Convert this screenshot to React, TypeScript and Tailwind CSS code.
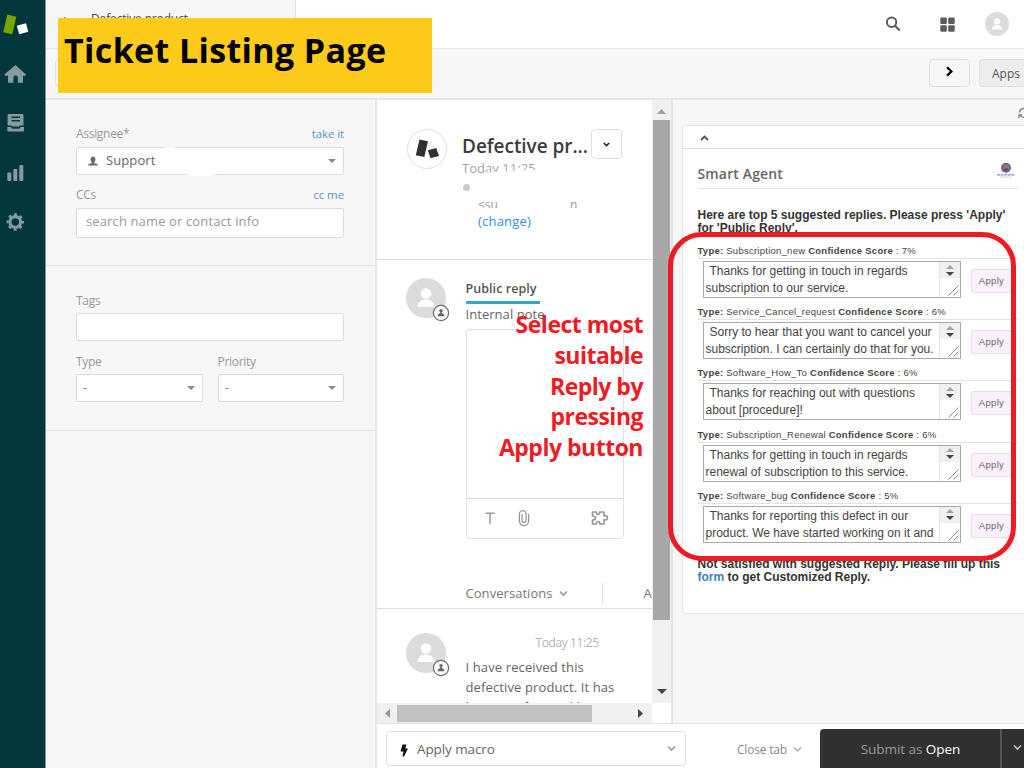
import React from "react";

const ui = "font-['Open_Sans','Noto_Sans',sans-serif]";
const arial = "font-['Liberation_Sans',Arial,sans-serif]";

function Chevron({ className = "", dir = "down", w = 1.6 }: { className?: string; dir?: "down" | "up" | "right"; w?: number }) {
  const d = dir === "down" ? "M1 2.5 4.5 6 8 2.5" : dir === "up" ? "M1 6 4.5 2.5 8 6" : "M2.5 1 6 4.5 2.5 8";
  return (
    <svg viewBox="0 0 9 9" className={className} fill="none" stroke="currentColor" strokeWidth={w}>
      <path d={d} />
    </svg>
  );
}

function Triangle({ className = "", d = "M0 0H8L4 4Z", box = "0 0 8 4" }: { className?: string; d?: string; box?: string }) {
  return (
    <svg viewBox={box} className={className} fill="currentColor">
      <path d={d} />
    </svg>
  );
}

function Sidebar() {
  return (
    <aside className="flex h-full w-[46px] shrink-0 flex-col border-r border-[#7d9598] bg-[#03363d] text-[#849b9f]">
      <svg viewBox="0 0 32 24" className="mt-[13px] h-6 w-8 shrink-0">
        <path d="M7.2 1.5 16.300 3.800 12.300 21.300 3.200 19.300Z" fill="#78a300" />
        <path d="M16.8 12.700 26 10.200 28.3 18.8 19.3 21.2Z" fill="#fff" />
      </svg>
      <svg viewBox="0 0 24 20" className="ml-[3px] mt-[27px] h-5 w-6 shrink-0" fill="currentColor">
        <path d="M12.5 1 23 10.5 22 11.8H20V18.7H14.8V13.5Q14.8 11.5 12.6 11.5T10.4 13.5V18.7H5V11.8H2.3L1.3 10.5Z" />
      </svg>
      <svg viewBox="0 0 18 20" className="ml-[7px] mt-[29px] h-5 w-[18px] shrink-0" fill="currentColor">
        <path fillRule="evenodd" d="M1.500 1H15.500Q16.500 1 16.500 2V12.500H13L12 13.500H5.500L4.500 12.500H.6V2Q.6 1 1.500 1ZM4.500 3.500H13V5H4.500ZM4.500 7H13V8.500H4.500Z" />
        <path d="M.3 14H4L5.300 15.700H12.300L13.500 14H17V17.500Q17 18.500 16 18.500H1.300Q.3 18.500 .3 17.500Z" />
      </svg>
      <svg viewBox="0 0 18 18" className="ml-[7px] mt-[31px] h-[18px] w-[18px] shrink-0" fill="currentColor">
        <rect x=".3" y="8.5" width="4" height="8.5" rx="1" />
        <rect x="6.3" y="5" width="4" height="12" rx="1" />
        <rect x="12.3" y="1" width="4" height="16" rx="1" />
      </svg>
      <svg viewBox="0 0 18 18" className="ml-[6px] mt-[31px] h-[18px] w-[18px] shrink-0" fill="none" stroke="currentColor">
        <circle cx="9.3" cy="9" r="5.3" strokeWidth="3.2" />
        <circle cx="9.3" cy="9" r="7.6" strokeWidth="2.2" strokeDasharray="3 2.97" strokeDashoffset="1.5" />
      </svg>
    </aside>
  );
}

function Person({ className = "" }: { className?: string }) {
  return (
    <svg viewBox="0 0 40 40" className={className}>
      <circle cx="20" cy="20" r="20" fill="#dcdcdc" />
      <circle cx="20" cy="15.5" r="5.2" fill="#fff" />
      <path d="M11.5 29Q12 21.5 20 21.5T28.5 29Z" fill="#fff" />
    </svg>
  );
}

function Avatar() {
  return (
    <div className="relative h-10 w-10 shrink-0">
      <Person className="h-10 w-10" />
      <svg viewBox="0 0 18 18" className="absolute left-[26px] top-[26px] h-[18px] w-[18px]">
        <circle cx="9" cy="9" r="7.6" fill="#fff" stroke="#6a6a6a" strokeWidth="1.2" />
        <circle cx="9" cy="6.700" r="1.700" fill="#666" />
        <path d="M8.300 7H9.700V9.300Q12.400 9.600 12.400 12.200H5.600Q5.600 9.600 8.300 9.300Z" fill="#666" />
      </svg>
    </div>
  );
}

function TopBar() {
  return (
    <header className="flex h-[49px] shrink-0 border-b border-[#e6e6e6] bg-white">
      <div className="w-[250px] border-r border-[#e3e3e3] bg-[#f7f7f7] pl-[18px] pt-[10px]">
        <span className={`${ui} flex gap-[21px] text-[12px] leading-[17px] tracking-[-0.15px] text-[#444]`}>
          <span className="w-[6px] overflow-hidden">▸</span>
          <span>Defective product</span>
        </span>
      </div>
      <div className="flex flex-1 items-center justify-end">
        <svg viewBox="0 0 16 16" className="mr-[39px] h-4 w-4" fill="none" stroke="#5c5c5c">
          <circle cx="6.6" cy="6.2" r="4.7" strokeWidth="2" />
          <path d="M10 9.7 14.8 14.5" strokeWidth="2.2" />
        </svg>
        <svg viewBox="0 0 15 15" className="mr-[30px] h-[15px] w-[15px]" fill="#5c5c5c">
          <rect x=".3" y=".5" width="6.5" height="6.5" rx="1" />
          <rect x="8.2" y=".5" width="6.5" height="6.5" rx="1" />
          <rect x=".3" y="8.3" width="6.5" height="6.5" rx="1" />
          <rect x="8.2" y="8.3" width="6.5" height="6.5" rx="1" />
        </svg>
        <Person className="mr-[15px] h-6 w-6" />
      </div>
    </header>
  );
}

function ToolBar() {
  return (
    <div className="flex h-[51px] shrink-0 items-center border-b-2 border-[#e6e6e6] bg-[#f7f7f7] pb-[2px]">
      <div className="ml-[9px] h-7 w-[120px] rounded border border-[#e3e3e3]" />
      <div className="ml-auto flex h-7 w-[41px] items-center justify-center rounded border border-[#e0e0e0] pb-[2px]">
        <Chevron dir="right" w={1.9} className="h-[11px] w-[11px] text-black" />
      </div>
      <div className={`${ui} ml-[9px] h-7 w-[45px] rounded-l border border-r-0 border-[#dedede] bg-[#ededed] pl-3 text-[12px] leading-[28px] text-[#555]`}>
        Apps
      </div>
    </div>
  );
}

const label = `${ui} text-[12px] leading-[21px] tracking-[-0.3px] text-[#999]`;
const link = `${ui} text-[11.5px] leading-[21px] tracking-[-0.1px] text-[#5a94c4]`;
const box = "border border-[#dcdcdc] bg-white rounded-[2px]";

function TicketFields() {
  return (
    <section className="flex h-full w-[331px] shrink-0 flex-col border-r-2 border-[#e6e6e6] bg-[#f7f7f7]">
      <div className="h-[166px] border-b border-[#e6e6e6] pl-[30px] pr-[31px] pt-[23px]">
        <div className="flex h-6 justify-between">
          <span className={label}>Assignee*</span>
          <span className={link}>take it</span>
        </div>
        <div className={`${box} relative flex h-7 items-center pl-[10px] pr-[7px]`}>
          <svg viewBox="0 0 12 11" className="h-[11px] w-3" fill="#6b6b6b">
            <ellipse cx="6" cy="3.6" rx="2.4" ry="3" />
            <path d="M4.7 5H7.3V7.3Q11 7.8 11 9.6H1Q1 7.8 4.7 7.3Z" />
          </svg>
          <span className={`${ui} -mt-[2px] ml-[7px] text-[13px] leading-5 tracking-[0.1px] text-[#666]`}>Support</span>
          <Triangle className="ml-auto h-1 w-2 text-[#8a8a8a]" />
          <span className="absolute -top-px left-[84px] h-2 w-[19px] rounded-[50%] bg-white" />
          <span className="absolute -bottom-[2px] left-[102px] h-3 w-[44px] rounded-[50%] bg-white" />
        </div>
        <div className="mt-[9px] flex h-6 justify-between">
          <span className={label}>CCs</span>
          <span className={link}>cc me</span>
        </div>
        <div className={`${box} ${ui} h-[30px] pl-[9px] text-[13px] leading-[25px] tracking-[0.13px] text-[#999]`}>search name or contact info</div>
      </div>
      <div className="h-[165px] border-b border-[#e6e6e6] pl-[30px] pr-[31px] pt-[24px]">
        <div className={`${label} h-[23px]`}>Tags</div>
        <div className={`${box} h-7`} />
        <div className="mt-[10px] grid grid-cols-2 gap-[15px]">
          {["Type", "Priority"].map((t) => (
            <div key={t}>
              <div className={`${label} h-[23px]`}>{t}</div>
              <div className={`${box} flex h-7 items-center justify-between pl-[6px] pr-[7px]`}>
                <span className={`${ui} text-[13px] text-[#888]`}>-</span>
                <Triangle className="h-1 w-2 text-[#8a8a8a]" />
              </div>
            </div>
          ))}
        </div>
      </div>
    </section>
  );
}

function TicketHeader() {
  return (
    <div className="relative flex h-[160px] shrink-0 border-b border-[#dedede] pl-[30px] pt-[29px]">
      <div className="h-10 w-10 shrink-0 rounded-full border border-[#dedede]">
        <svg viewBox="0 0 38 38" className="h-[38px] w-[38px]" fill="#303030">
          <path d="M11.500 9.500 20 11.300 16.300 27 7.800 25.200Z" />
          <path d="M19.800 20.200 28.200 18 31 26 22.500 28.300Z" />
        </svg>
      </div>
      <div className={`${ui} ml-[15px] w-[129px]`}>
        <div className="h-[30px] w-[129px] whitespace-nowrap text-[19px] font-semibold leading-[34px] tracking-[-0.05px] text-[#3c3c3c]">Defective pr...</div>
        <div className="text-[13px] leading-[18px] tracking-[0.05px] text-[#a3a3a3]">Today 11:25</div>
        <div className="ml-px mt-[7px] h-[7px] w-[7px] rounded-full bg-[#ccc]" />
        <div className="ml-4 mt-[5px] h-[13px] text-[12px] leading-[17px] text-[#999]">
          &lt;su<span className="ml-[72px]">n</span>
        </div>
        <div className="relative z-10 ml-4 mt-[2px] text-[13px] leading-[20px] tracking-[0.2px] text-[#3091dc]">(change)</div>
      </div>
      <div className="flex h-[30px] w-[31px] items-center justify-center rounded border border-[#dedede]">
        <Chevron className="h-[7px] w-[7px] text-[#222]" w={2} />
      </div>
      <span className="absolute left-[107px] top-[71px] h-[9px] w-14 -rotate-3 bg-white" />
      <span className="absolute left-[100px] top-[108px] h-[6px] w-28 bg-white" />
    </div>
  );
}

function ReplyEditor() {
  return (
    <div className="flex h-[349px] shrink-0 border-b border-[#dedede] pl-[29px] pt-[18px]">
      <Avatar />
      <div className={`${ui} ml-[19.5px] flex w-[210px] shrink-0 flex-col`}>
        <div className="h-[26px] w-[74px] whitespace-nowrap border-b-[3px] border-[#30aabc] text-[12.5px] font-semibold leading-[21px] tracking-[0.05px] text-[#555]">Public reply</div>
        <div className="whitespace-nowrap text-[13px] leading-[20px] tracking-[0.05px] text-[#666]">Internal note</div>
        <div className="mt-[5px] flex h-[210px] w-[158px] flex-col rounded border border-[#e2e2e2]">
          <div className="flex-1" />
          <div className="flex h-[40px] items-center border-t border-[#dadada] pb-[2px] pl-[17px] pr-[14px] text-[#999]">
            <svg viewBox="0 0 12 14" className="h-[14px] w-3" fill="none" stroke="currentColor" strokeWidth="1.4">
              <path d="M1.5 2.2H10.5M6 2.2V13" />
            </svg>
            <svg viewBox="0 0 12 18" className="ml-[22px] h-[18px] w-3" fill="none" stroke="currentColor" strokeWidth="1.3">
              <path d="M4 5V11.5A2 2 0 0 0 8 11.5V5A3.3 3.3 0 0 0 1.4 5V12A4.6 4.6 0 0 0 10.6 12V5" />
            </svg>
            <svg viewBox="0 0 18 16" className="ml-auto h-4 w-[18px]" fill="none" stroke="currentColor" strokeWidth="1.7" strokeLinejoin="round">
              <path d="M1.5 2H5.3Q5.3 4.5 7 4.5T8.7 2H13V5.7Q16.5 5.2 16.5 7.7T13 9.8V14H9Q9 11.5 7.2 11.5T5.4 14H1.5V10Q4.5 10 4.5 8T1.5 6Z" />
            </svg>
          </div>
        </div>
        <div className="mt-[42px] flex items-center whitespace-nowrap text-[13px] leading-6 tracking-[0.05px] text-[#777]">
          <span>Conversations</span>
          <Chevron className="ml-[6px] h-[9px] w-[9px] text-[#999]" />
          <span className="ml-[34px] h-5 w-px bg-[#ddd]" />
          <span className="ml-[41px]">All</span>
        </div>
      </div>
    </div>
  );
}

function Comment() {
  return (
    <div className="flex min-h-0 flex-1 overflow-hidden pl-[29px] pt-6">
      <Avatar />
      <div className={`${ui} ml-[19.5px] shrink-0 whitespace-nowrap`}>
        <div className="pl-[70px] text-[12px] leading-[20px] tracking-[-0.4px] text-[#b3b3b3]">Today 11:25</div>
        <p className="mt-[4px] text-[13px] leading-5 tracking-[0.12px] text-[#666]">
          I have received this<br />defective product. It has<br />because if owned by
        </p>
      </div>
    </div>
  );
}

function Conversation() {
  return (
    <section className="flex h-full w-[296px] shrink-0 flex-col border-r-2 border-[#e4e4e4] bg-white">
      <div className="flex h-[603px]">
        <div className="flex w-[275px] shrink-0 flex-col overflow-hidden">
          <TicketHeader />
          <ReplyEditor />
          <Comment />
        </div>
        <div className="flex flex-1 flex-col items-center bg-[#f0f0f0]">
          <Triangle d="M0 5H9L4.5 0Z" box="0 0 9 5" className="mt-[9px] h-[5px] w-[9px] text-[#a0a0a0]" />
          <div className="mt-[6px] h-[500px] w-[17px] bg-[#a8a8a8]" />
          <Triangle className="mb-[9px] mt-auto h-[5px] w-[10px] text-[#444]" />
        </div>
      </div>
      <div className="flex h-5">
        <div className="flex w-[275px] items-center bg-[#f0f0f0]">
          <Triangle d="M5 0V9L0 4.5Z" box="0 0 5 9" className="ml-2 h-[9px] w-[5px] text-[#999]" />
          <div className="ml-[7px] h-[17px] w-[195px] bg-[#c1c1c1]" />
          <Triangle d="M0 0V9L5 4.5Z" box="0 0 5 9" className="ml-[46px] h-[9px] w-[5px] text-[#444]" />
        </div>
      </div>
    </section>
  );
}

const replies = [
  { type: "Subscription_new", score: "7%", a: "Thanks for getting in touch in regards", b: "subscription to our service." },
  { type: "Service_Cancel_request", score: "6%", a: "Sorry to hear that you want to cancel your", b: "subscription. I can certainly do that for you." },
  { type: "Software_How_To", score: "6%", a: "Thanks for reaching out with questions", b: "about [procedure]!" },
  { type: "Subscription_Renewal", score: "6%", a: "Thanks for getting in touch in regards", b: "renewal of subscription to this service." },
  { type: "Software_bug", score: "5%", a: "Thanks for reporting this defect in our", b: "product. We have started working on it and" },
];

function SuggestedReply({ type, score, a, b }: (typeof replies)[number]) {
  return (
    <div className={`${arial} h-[61.2px]`}>
      <div className="h-[15px] whitespace-nowrap border-b border-[#e3e3e3] text-[9.5px] leading-[14px] tracking-[0.25px] text-[#444]">
        <b>Type:</b> {type} <b>Confidence Score</b> : {score}
      </div>
      <div className="flex pl-[5px] pt-[2px]">
        <div className="flex h-[37px] w-[258px] border border-[#a9a9a9] bg-white">
          <div className="flex-1 whitespace-nowrap pl-[2px] pt-px text-[12px] leading-[17px] text-[#444]">
            <div className="pl-1">{a}</div>
            <div>{b}</div>
          </div>
          <div className="flex w-[21px] flex-col border-l border-[#e4e4e4]">
            <div className="flex h-4 flex-col items-center justify-center gap-[3px] bg-[#f0f0f0]">
              <Triangle d="M0 4H8L4 0Z" className="h-1 w-2 text-[#a3a3a3]" />
              <Triangle className="h-1 w-2 text-[#444]" />
            </div>
            <svg viewBox="0 0 19 19" className="h-[19px] w-[19px]" stroke="#8c8c8c" strokeWidth="1">
              <path d="M8.500 17.500 18.500 7.500M13.500 17.500 18.500 12.500" />
            </svg>
          </div>
        </div>
        <div className="ml-[10.5px] mt-2 h-6 w-[41px] rounded-[3px] border border-[#e6dbe6] bg-[#fdf0fd] text-center text-[9.5px] leading-[22px] tracking-[0.3px] text-[#666]">Apply</div>
      </div>
    </div>
  );
}

function AppsPanel() {
  return (
    <section className="flex min-w-0 flex-1 flex-col overflow-hidden bg-[#f7f7f7]">
      <div className="flex h-[25px] shrink-0 justify-end overflow-hidden">
        <svg viewBox="0 0 12 12" className="-mr-[6px] mt-[7px] h-3 w-3 shrink-0" fill="none" stroke="#888" strokeWidth="1.5">
          <path d="M1.500 5.500A4.500 4.500 0 0 1 10 4M10.500 6.500A4.500 4.500 0 0 1 2 8M1 11V8H4" />
        </svg>
      </div>
      <div className="ml-[9px] flex h-[489px] w-[360px] shrink-0 flex-col rounded border border-[#e4e4e4] bg-white">
        <div className="h-[23px] shrink-0 border-b border-[#dedede] pl-[17px] pt-2">
          <Chevron dir="up" w={1.8} className="h-[9px] w-[9px] text-[#555]" />
        </div>
        <div className="ml-[14.5px] w-80">
          <div className="flex h-[40px] justify-between border-b border-[#e6e6e6] pr-[3px]">
            <div className={`${ui} pt-[15px] text-[14px] font-semibold leading-5 tracking-[0.15px] text-[#666]`}>Smart Agent</div>
            <svg viewBox="0 0 18 18" className="mt-[13px] h-[18px] w-[18px]">
              <circle cx="9" cy="5.800" r="5" fill="#68669c" />
              <circle cx="9" cy="5.500" r="3" fill="#a47a56" />
              <path d="M7 8.500H11V6.500H7Z" fill="#4b4670" />
              <path d="M0 12.800H18" stroke="#8a8ad0" strokeWidth="1.300" strokeDasharray="3 .5" />
              <path d="M3 15H15" stroke="#c6c6e8" strokeWidth=".8" />
            </svg>
          </div>
          <p className={`${arial} h-[55px] whitespace-nowrap pt-[20px] text-[12px] font-bold leading-[13px] text-[#333]`}>
            Here are top 5 suggested replies. Please press 'Apply'<br />for 'Public Reply'.
          </p>
          {replies.map((r) => (
            <SuggestedReply key={r.type} {...r} />
          ))}
          <p className={`${arial} mt-[8px] whitespace-nowrap text-[12px] font-bold leading-[13px] text-[#333]`}>
            Not satisfied with suggested Reply. Please fill up this<br /><span className="text-[#3f7fc1]">form</span> to get Customized Reply.
          </p>
        </div>
      </div>
    </section>
  );
}

function Footer() {
  return (
    <footer className={`${ui} flex h-[45px] shrink-0 border-t border-[#e2e2e2] bg-white`}>
      <div className="ml-[9px] mt-[7px] flex h-[35px] w-[300px] items-center rounded border border-[#dedede] pl-[12px] pr-[9px]">
        <svg viewBox="0 0 10 13" className="mt-[3px] h-[13px] w-[10px]" fill="#111">
          <path d="M3.500 .5H7.300L6.500 4.500H9L5 12.500H3.500L4.500 7.500H1.500Z" />
        </svg>
        <span className="ml-[8px] mt-px text-[13.5px] tracking-[-0.1px] text-[#666]">Apply macro</span>
        <Chevron className="ml-auto h-[9px] w-[9px] text-[#999]" />
      </div>
      <div className="ml-[51px] flex h-[51px] items-center text-[12px] tracking-[-0.2px] text-[#888]">
        Close tab
        <Chevron className="ml-[6px] h-[9px] w-[9px] text-[#aaa]" w={1.3} />
      </div>
      <div className="ml-auto mt-[5px] flex h-[40px] w-[204px] shrink-0 overflow-hidden rounded-tl bg-[#303030]">
        <div className="w-[182px] border-r-2 border-[#555] pl-px text-center text-[13.5px] leading-[40px] tracking-[-0.05px] text-[#999]">
          Submit as <span className="text-white">Open</span>
        </div>
        <Chevron className="ml-[11px] mt-[14px] h-[9px] w-[9px] shrink-0 text-[#bbb]" />
      </div>
    </footer>
  );
}

export default function App() {
  return (
    <div className="relative flex h-[768px] w-[1024px] overflow-hidden bg-white">
      <Sidebar />
      <main className="flex min-w-0 flex-1 flex-col">
        <TopBar />
        <ToolBar />
        <div className="flex min-h-0 flex-1">
          <TicketFields />
          <div className="flex min-w-0 flex-1 flex-col">
            <div className="flex h-[623px] shrink-0">
              <Conversation />
              <AppsPanel />
            </div>
            <Footer />
          </div>
        </div>
      </main>

      <div className={`${ui} absolute left-[58px] top-[18px] h-[75px] w-[374px] whitespace-nowrap bg-[#ffcb1a] pl-[6px] text-[34px] font-bold leading-[64px] tracking-[0.37px] text-black`}>
        Ticket Listing Page
      </div>
      <div className={`${ui} absolute left-[463px] top-[309px] w-[180px] whitespace-nowrap text-right text-[23px] font-bold leading-[30.8px] tracking-[-0.5px] text-[#ed1c24]`}>
        Select most<br />suitable<br />Reply by<br />pressing<br />Apply button
      </div>
      <div className="absolute left-[668px] top-[232px] h-[329px] w-[348px] rounded-[34px] border-[5px] border-[#ed1c24]" />
    </div>
  );
}
